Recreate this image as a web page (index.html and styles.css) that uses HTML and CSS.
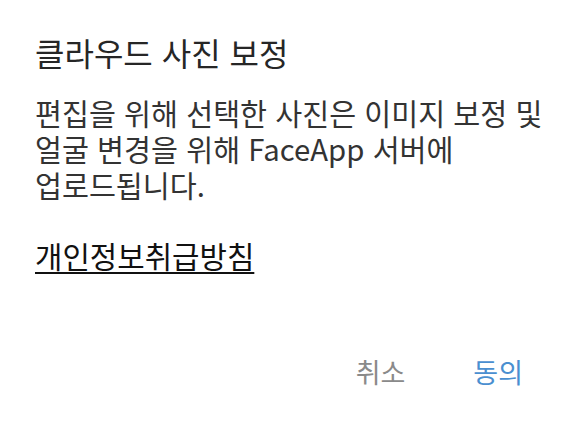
FILE: index.html
```html
<!DOCTYPE html>
<html lang="ko">
<head>
<meta charset="utf-8">
<link rel="stylesheet" href="styles.css">
</head>
<body>
<div class="dialog">
  <h1 class="title">클라우드 사진 보정</h1>
  <p class="body">편집을 위해 선택한 사진은 이미지 보정 및<br>얼굴 변경을 위해 FaceApp 서버에<br>업로드됩니다.</p>
  <a class="link" href="#">개인정보취급방침</a>
  <div class="actions">
    <button class="btn cancel">취소</button>
    <button class="btn ok">동의</button>
  </div>
</div>
</body>
</html>
```
FILE: styles.css
```css
html, body { margin: 0; padding: 0; background: #fff; }
body { width: 580px; height: 423px; overflow: hidden; font-family: "Noto Sans CJK KR", "Noto Sans", sans-serif; }
.dialog { padding: 30px 35px 0 35px; display: flex; flex-direction: column; }
.title { margin: 0; font-size: 32px; font-weight: 400; color: #262626; line-height: 44px; }
.body { margin: 20px 0 0 0; font-size: 29.3px; color: #333; line-height: 36px; white-space: nowrap; }
.link { margin-top: 35px; font-size: 29.8px; color: #111; text-decoration: underline; text-underline-offset: 4px; line-height: 36px; align-self: flex-start; }
.actions { display: flex; justify-content: flex-end; gap: 68px; margin-top: 84px; padding-right: 22px; }
.btn { border: 0; background: none; padding: 0; font-family: inherit; font-size: 27px; line-height: 30px; }
.cancel { color: #8a8a8a; }
.ok { color: #4a8fd0; }
```
